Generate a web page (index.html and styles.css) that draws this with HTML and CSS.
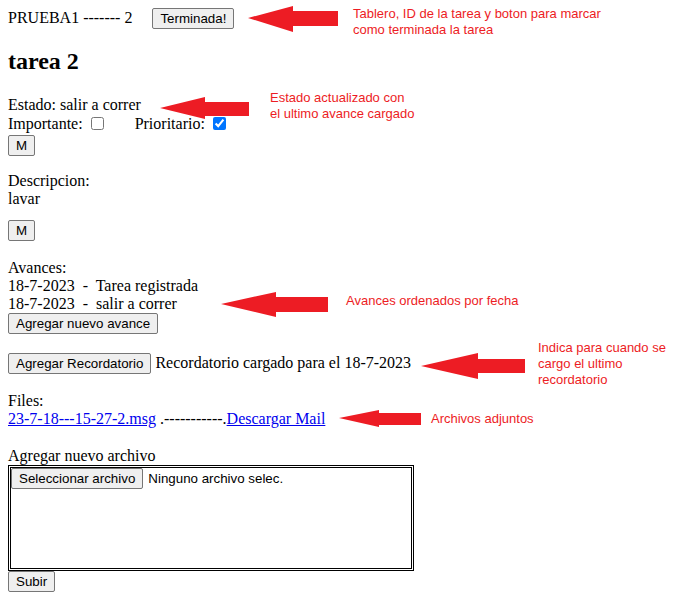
FILE: index.html
```html
<!DOCTYPE html>
<html lang="es">
<head>
<meta charset="utf-8">
<title>tarea 2</title>
<link rel="stylesheet" href="styles.css">
</head>
<body>
<div class="page">
  <div class="row-top"><span class="board">PRUEBA1 ------- 2</span><button class="btn btn-done">Terminada!</button></div>
  <h2 class="title">tarea 2</h2>

  <div class="line">Estado: salir a correr</div>
  <div class="line flags">Importante: <input type="checkbox" class="chk"><span class="prio">Prioritario:</span> <input type="checkbox" class="chk" checked></div>
  <div class="btn-row"><button class="btn">M</button></div>

  <div class="section desc">
    <div class="line">Descripcion:</div>
    <div class="line">lavar</div>
  </div>
  <div class="btn-row desc-btn"><button class="btn">M</button></div>

  <div class="section avances">
    <div class="line">Avances:</div>
    <div class="line">18-7-2023&nbsp; -&nbsp; Tarea registrada</div>
    <div class="line">18-7-2023&nbsp; -&nbsp; salir a correr</div>
    <div class="btn-row"><button class="btn">Agregar nuevo avance</button></div>
  </div>

  <div class="section recordatorio">
    <button class="btn">Agregar Recordatorio</button><span class="rec-text">Recordatorio cargado para el 18-7-2023</span>
  </div>

  <div class="section files">
    <div class="line">Files:</div>
    <div class="line"><a href="#">23-7-18---15-27-2.msg</a> .-----------.<a href="#">Descargar Mail</a></div>
  </div>

  <div class="section upload">
    <div class="line">Agregar nuevo archivo</div>
    <div class="dropbox">
      <div class="file-input"><button class="btn">Seleccionar archivo</button><span class="file-name">Ninguno archivo selec.</span></div>
    </div>
    <div class="btn-row"><button class="btn">Subir</button></div>
  </div>

  <svg class="arrows" width="685" height="599" viewBox="0 0 685 599" aria-hidden="true">
    <polygon points="248,18 293,6 293,11 338,11 338,26 293,26 293,32"/>
    <polygon points="160,108 205,97 205,102 249,102 249,116 205,116 205,119"/>
    <polygon points="221,304 276,292 276,297 328,297 328,312 276,312 276,317"/>
    <polygon points="421,366 478,353 478,359 525,359 525,373 478,373 478,379"/>
    <polygon points="339,418 379,410 379,413 421,413 421,425 379,425 379,427"/>
  </svg>

  <div class="note note-1">Tablero, ID de la tarea y boton para marcar<br>como terminada la tarea</div>
  <div class="note note-2">Estado actualizado con<br>el ultimo avance cargado</div>
  <div class="note note-3">Avances ordenados por fecha</div>
  <div class="note note-4">Indica para cuando se<br>cargo el ultimo<br>recordatorio</div>
  <div class="note note-5">Archivos adjuntos</div>
</div>
</body>
</html>
```
FILE: styles.css
```css
html, body {
  margin: 0;
  padding: 0;
  background: #ffffff;
}

body {
  font-family: "Liberation Serif", "Times New Roman", serif;
  font-size: 16px;
  color: #000000;
}

.page {
  position: relative;
  width: 685px;
  min-height: 599px;
  padding: 8px;
  box-sizing: border-box;
}

.line {
  line-height: 18px;
}

.btn {
  font-family: "Liberation Sans", Arial, sans-serif;
  font-size: 13.333px;
  line-height: 15px;
  color: #000000;
  background: #efefef;
  border: 1px solid #767676;
  border-radius: 2px;
  padding: 2px 7px;
  margin: 0;
  vertical-align: baseline;
}

.row-top {
  display: flex;
  align-items: baseline;
  height: 21px;
}

.btn-done {
  margin-left: 20px;
}

.title {
  font-size: 24px;
  font-weight: bold;
  margin: 18px 0 21px;
  line-height: 28px;
}

.flags {
  height: 20px;
  line-height: 20px;
}

.chk {
  width: 13px;
  height: 13px;
  margin: 0 3px 0 4px;
  vertical-align: -1px;
}

.prio {
  margin-left: 28px;
}

.btn-row {
  height: 21px;
}

.flags + .btn-row {
  margin-top: 1px;
}

.section {
  margin-top: 16px;
}

.desc-btn {
  margin-top: 12px;
}

.avances {
  margin-top: 18px;
}

.recordatorio {
  margin-top: 19px;
  display: flex;
  align-items: baseline;
  height: 21px;
}

.rec-text {
  margin-left: 4px;
}

.files {
  margin-top: 18px;
}

a {
  color: #0000ee;
  text-decoration: underline;
}

.upload {
  margin-top: 19px;
}

.dropbox {
  width: 400px;
  height: 100px;
  border: 3px double #000000;
}

.file-input {
  display: flex;
  align-items: baseline;
}

.file-name {
  font-family: "Liberation Sans", Arial, sans-serif;
  font-size: 13.333px;
  margin-left: 5px;
}

.arrows {
  position: absolute;
  left: 0;
  top: 0;
  fill: #ed1c24;
  pointer-events: none;
}

.note {
  position: absolute;
  font-family: "Liberation Sans", Arial, sans-serif;
  font-size: 13px;
  line-height: 16px;
  color: #ed1c24;
  white-space: nowrap;
}

.note-1 { left: 353px; top: 6px; }
.note-2 { left: 270px; top: 90px; }
.note-3 { left: 346px; top: 293px; }
.note-4 { left: 538px; top: 340px; }
.note-5 { left: 431px; top: 411px; }
```
